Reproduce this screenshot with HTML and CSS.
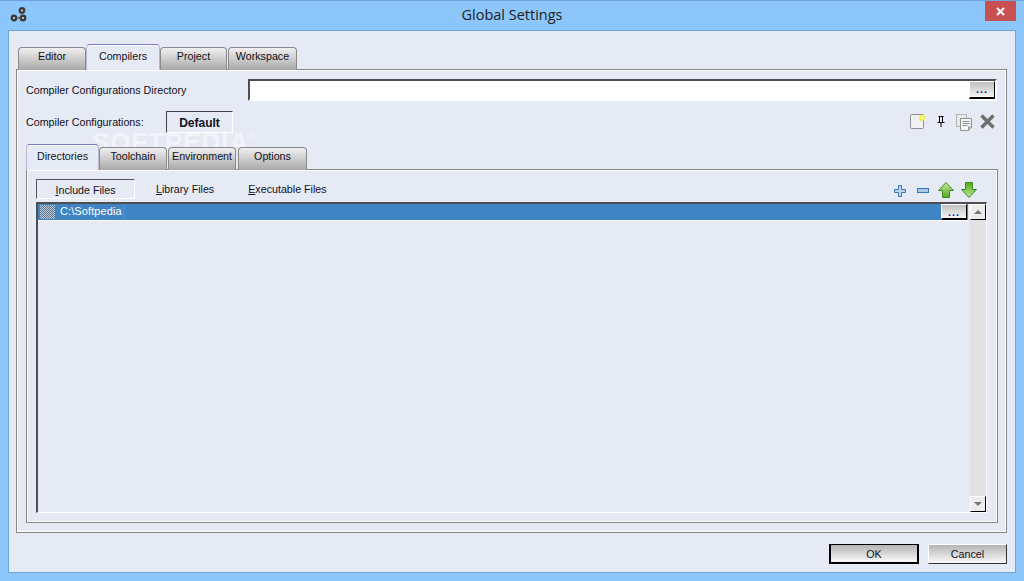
FILE: index.html
```
<!DOCTYPE html>
<html lang="en">
<head>
<meta charset="utf-8">
<title>Global Settings</title>
<link rel="stylesheet" href="styles.css">
</head>
<body>
<div class="window">
  <header class="titlebar">
    <svg class="app-icon" width="18" height="18" viewBox="0 0 18 18"><g fill="#dfeaf8" stroke="#3a3a3a" stroke-width="2.400"><circle cx="12" cy="4.500" r="2.200"/><circle cx="4" cy="12" r="2.200"/><circle cx="13" cy="12" r="2.200"/></g><path d="M12 7v2.500M6.500 12h4" stroke="#666" stroke-width="1.500"/></svg>
    <h1 class="title">Global Settings</h1>
    <button class="close"><svg width="9" height="9" viewBox="0 0 9 9"><path d="M1 1l7 7M8 1L1 8" stroke="#fff" stroke-width="2"/></svg></button>
  </header>
  <main class="client">
    <nav class="tabs">
      <span class="tab w-editor">Editor</span>
      <span class="tab active w-compilers">Compilers</span>
      <span class="tab w-project">Project</span>
      <span class="tab w-workspace">Workspace</span>
    </nav>
    <section class="pane outer">
      <div class="dir-row">
        <label class="dir-label">Compiler Configurations Directory</label>
        <div class="dir-input"><span class="dots-btn">...</span></div>
      </div>
      <div class="config-row">
        <label class="config-label">Compiler Configurations:</label>
        <span class="default-tab">Default</span>
        <div class="tools">
          <svg class="new" width="16" height="16" viewBox="0 0 16 16"><rect x="0.500" y="0.500" width="13" height="14" rx="1" fill="#f2f2f2" stroke="#8f8f8f"/><circle cx="12" cy="4" r="3" fill="#f4ee30"/><circle cx="12" cy="4" r="1.500" fill="#fdfdb0"/></svg>
          <svg class="pin" width="8" height="11" viewBox="0 0 8 11"><path d="M1.500.5h5M2.500 1v5M5.500 1v5M.5 6.500h7M4 7v4" stroke="#000" fill="none"/></svg>
          <svg class="copy" width="16" height="17" viewBox="0 0 16 17"><rect x="0.500" y="0.500" width="10" height="12" fill="#e6e8ee" stroke="#b4b4b4"/><path d="M4.500 4.500h11v9l-3 3h-8z" fill="#f5f6f8" stroke="#8f8f8f"/><path d="M6.500 7.500h7M6.500 9.500h7M6.500 11.500h5" stroke="#8f8f8f"/><path d="M12.500 16v-3h3" fill="#ddd" stroke="#8f8f8f"/></svg>
          <svg class="del" width="15" height="15" viewBox="0 0 15 15"><path d="M1.500 1.500l12 12M13.500 1.500l-12 12" stroke="#6f6f6f" stroke-width="3.400"/></svg>
        </div>
      </div>
      <nav class="tabs sub-tabs">
        <span class="tab active w-dirs">Directories</span>
        <span class="tab w-tool">Toolchain</span>
        <span class="tab w-env">Environment</span>
        <span class="tab w-opt">Options</span>
      </nav>
      <section class="pane inner">
        <div class="list-bar">
          <span class="sel-tab"><u>I</u>nclude Files</span>
          <span class="file-tab lib"><u>L</u>ibrary Files</span>
          <span class="file-tab exe"><u>E</u>xecutable Files</span>
          <div class="list-tools">
            <svg class="plus" width="12" height="12" viewBox="0 0 12 12"><path d="M4.500.5h3v4h4v3h-4v4h-3v-4h-4v-3h4z" fill="#bcd6f0" stroke="#3a78b8"/></svg>
            <svg class="minus" width="12" height="5" viewBox="0 0 12 5"><rect x=".5" y=".5" width="11" height="4" fill="#a8c8ea" stroke="#3a78b8"/></svg>
            <svg class="up" width="16" height="16" viewBox="0 0 16 16"><defs><linearGradient id="gu" x1="0" y1="0" x2="0" y2="1"><stop offset="0" stop-color="#c8e8a0"/><stop offset="1" stop-color="#4fae18"/></linearGradient></defs><path d="M8 .5L15.500 8.500H11.500V15.500H4.500V8.500H.5z" fill="url(#gu)" stroke="#3c8a1c"/></svg>
            <svg class="down" width="16" height="16" viewBox="0 0 16 16"><defs><linearGradient id="gd" x1="0" y1="0" x2="0" y2="1"><stop offset="0" stop-color="#4fae18"/><stop offset="1" stop-color="#c0e498"/></linearGradient></defs><path d="M8 15.500L15.500 7.500H11.500V.5H4.500V7.500H.5z" fill="url(#gd)" stroke="#3c8a1c"/></svg>
          </div>
        </div>
        <div class="list">
          <div class="list-main">
            <div class="row">
              <span class="row-icon"></span>
              <span class="row-text">C:\Softpedia</span><span class="caret"></span>
              <span class="dots-btn row-btn">...</span>
            </div>
          </div>
          <div class="scrollbar">
            <span class="sb-btn"><i class="arrow-up"></i></span>
            <span class="sb-track"></span>
            <span class="sb-btn"><i class="arrow-down"></i></span>
          </div>
        </div>
      </section>
    </section>
    <footer class="actions">
      <button class="btn default">OK</button>
      <button class="btn cancel">Cancel</button>
    </footer>
    <span class="watermark">SOFTPEDIA<sup>®</sup></span>
  </main>
</div>
</body>
</html>
```
FILE: styles.css
```
* { box-sizing: border-box; }
html, body { margin: 0; padding: 0; }
body { width: 1024px; height: 581px; overflow: hidden; font: 10.7px "Liberation Sans", sans-serif; color: #10101c; }
.window { width: 1024px; height: 581px; background: #8cc6fb; border-top: 1px solid #6da3d8; display: flex; flex-direction: column; }
.titlebar { height: 29px; display: flex; align-items: flex-start; position: relative; flex: none; }
.app-icon { margin: 5px 0 0 10px; }
.title { position: absolute; left: 0; right: 0; top: 4px; margin: 0; text-align: center; font: 400 14.5px/20px "Open Sans", sans-serif; color: #222; }
.close { position: absolute; right: 8px; top: 0; width: 31px; height: 20px; border: 0; padding: 0; background: #c75050; display: flex; align-items: center; justify-content: center; }
.client { position: relative; margin: 0 8px 8px 8px; width: 1008px; height: 543px; background: #e6eaf5; border: 1px solid #6fa6da; padding: 13px 8px 0 7px; }
.tabs { display: flex; height: 26px; padding-left: 2px; position: relative; z-index: 1; margin-bottom: -1px; }
.tab { height: 23px; margin-top: 3px; padding-top: 1px; line-height: 14px; text-align: center; white-space: nowrap; border: 1px solid #8a8a8a; border-bottom: 0; border-radius: 4px 4px 0 0; background: linear-gradient(#f0f0f0, #a8a8a8); }
.tab.active { height: 26px; margin-top: 0; padding-top: 4px; background: #e6eaf5; border-color: #7a7ac8 #b8b8d0 transparent; box-shadow: inset 0 1px 0 #fff; }
.w-editor { width: 68px; }
.w-compilers { width: 74px; }
.w-project { width: 67px; }
.w-workspace { width: 69px; margin-left: 1px; }
.w-dirs { width: 73px; }
.w-tool { width: 68px; }
.w-env { width: 68px; margin-left: 1px; }
.w-opt { width: 69px; margin-left: 2px; }
.pane { border: 1px solid #868686; box-shadow: inset 1px 1px 0 #fff, inset -1px -1px 0 #fff; }
.outer { width: 991px; height: 464px; padding: 9px 9px 0 9px; }
.dir-row { display: flex; height: 22px; align-items: center; }
.dir-label { width: 222px; }
.dir-input { width: 749px; height: 22px; background: #fff; border: 2px solid #4f4f4f; border-right-color: #fff; border-bottom-color: #fff; display: flex; justify-content: flex-end; align-items: stretch; }
.dots-btn { width: 26px; background: linear-gradient(#c0c0c0, #f4f4f4); border: 1px solid #fff; border-right-color: #000; border-bottom: 2px solid #000; color: #1a1a8c; font-weight: 700; font-size: 11px; letter-spacing: 1px; line-height: 15px; text-align: center; }
.config-row { display: flex; align-items: center; height: 22px; margin-top: 10px; position: relative; }
.config-label { width: 140px; }
.default-tab { width: 67px; height: 22px; padding-top: 2px; display: flex; align-items: center; justify-content: center; font-weight: 700; font-size: 12px; border: 1px solid #444; border-right-color: #fff; border-bottom-color: #fff; }
.tools { margin-left: auto; display: flex; align-items: flex-start; align-self: flex-start; margin-right: 2px; }
.new { margin-top: 3px; }
.pin { margin: 5px 0 0 11px; }
.copy { margin: 3px 0 0 11px; }
.del { margin: 3px 0 0 8px; }
.sub-tabs { margin-top: 11px; padding-left: 0; }
.inner { width: 972px; height: 354px; padding: 9px 10px 0 9px; }
.list-bar { display: flex; align-items: flex-start; height: 23px; }
.sel-tab { width: 99px; height: 20px; display: flex; align-items: center; justify-content: center; border: 1px solid #555; border-right-color: #fff; border-bottom-color: #fff; padding-top: 1px; white-space: pre; }
.file-tab { line-height: 20px; }
.file-tab.lib { margin-left: 21px; }
.file-tab.exe { margin-left: 34px; }
.list-tools { margin-left: auto; display: flex; align-items: flex-start; margin-right: 10px; }
.plus { margin-top: 6px; }
.minus { margin: 9px 0 0 11px; }
.up { margin: 3px 0 0 9px; }
.down { margin: 3px 0 0 7px; }
.list { display: flex; width: 951px; height: 311px; border-left: 2px solid #4f4f4f; border-top: 2px solid #4f4f4f; border-bottom: 1px solid #fff; border-right: 1px solid #fff; }
.list-main { flex: 1; min-width: 0; }
.row { height: 17px; background: #3f84c4; color: #fff; display: flex; align-items: center; padding-left: 2px; border-bottom: 1px solid #fff; }
.row-icon { width: 15px; height: 14px; background: repeating-conic-gradient(#5f6f86 0 25%, #b9cfe6 0 50%) 0 0 / 2px 2px; }
.row-text { margin-left: 5px; font-size: 11px; letter-spacing: 0.1px; line-height: 14px; padding-bottom: 2px; }
.caret { width: 1px; height: 15px; background: #c87a30; margin-left: 1px; }
.row-btn { margin-left: auto; height: 16px; margin-right: 1px; }
.scrollbar { width: 16px; display: flex; flex-direction: column; margin-left: 2px; }
.sb-btn { height: 16px; flex: none; background: #ececec; border: 1px solid #fff; border-right-color: #000; border-bottom-color: #000; display: flex; align-items: center; justify-content: center; }
.sb-track { flex: 1; background: #e2e2e2; }
.arrow-up { border: 4px solid transparent; border-top: 0; border-bottom: 4px solid #777; }
.arrow-down { border: 4px solid transparent; border-bottom: 0; border-top: 4px solid #777; }
.actions { display: flex; justify-content: flex-end; gap: 9px; margin-top: 11px; }
.btn { height: 20px; padding: 0; background: linear-gradient(#b4b4b4, #fafafa); border: 1px solid #fff; border-right-color: #333; border-bottom-color: #333; font: 10.7px "Liberation Sans", sans-serif; color: #10101c; }
.btn.default { width: 90px; border: 2px solid #000; border-top-width: 1px; }
.btn.cancel { width: 79px; }
.watermark { position: absolute; left: 83px; top: 99px; z-index: 0; font: 700 26px/24px "Liberation Sans", sans-serif; letter-spacing: 0.9px; color: rgba(255,255,255,.5); pointer-events: none; }
.watermark sup { font-size: 9px; font-weight: 400; vertical-align: 12px; line-height: 0; }
```
